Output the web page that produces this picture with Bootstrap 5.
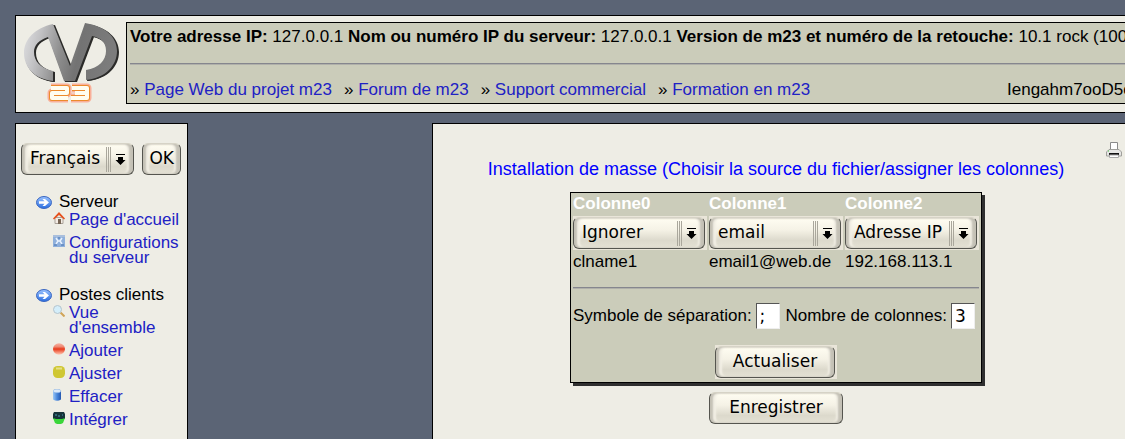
<!DOCTYPE html>
<html lang="fr">
<head>
<meta charset="utf-8">
<meta name="viewport" content="width=device-width, initial-scale=1">
<title>m23 - Installation de masse</title>
<link href="https://cdn.jsdelivr.net/npm/bootstrap@5.3.0/dist/css/bootstrap.min.css" rel="stylesheet">
<style>
  body { background: #5b6475; color: #000; font: 17px/20px "Liberation Sans", Arial, sans-serif; overflow-x: hidden; min-height: 100vh; }
  a { color: #2121c4; text-decoration: none; }
  hr { border-top: 1px solid #85868e; border-bottom: 1px solid #b0b0aa; opacity: 1; }
  .sheet { background: #eeede5; border: 1px solid #000; }
  .olive { background: #cbccba; border: 1px solid #000; }
  .open-right { border-right: 0; }
  .page { padding: 15px 0 0 15px; gap: 10px; min-height: 100vh; }
  .masthead { padding: 6px 0 8px 6px; gap: 2px; }
  .status { padding: 4px 0 3px 3px; min-width: 0; }
  .status hr { margin: 16px 0 15px; }
  .quick { gap: 12px; }
  .token { width: 118px; }
  .columns { gap: 244px; }
  .side { width: 173px; padding: 19px 6px 0 5px; }
  .work { padding: 18px 6px 0 0; min-width: 0; }
  .printer { margin: 0 -5px 0 auto; height: 16px; }
  .printer svg { display: block; }
  .skin {
    font: 17px/22px "DejaVu Sans", sans-serif; color: #000;
    height: 32px; border: 1px solid #55554f; border-top-color: #d6d3c6; border-radius: 6px;
    background-color: #e9e6da; background-image: linear-gradient(#fffdf2, #f5f2e6 40%, #dcd9cc 75%, #e4e1d4);
    box-shadow: inset 3px 0 2px #c4c1b6, inset -4px 0 2px #c4c1b6, inset 6px 0 2px #f3f0e6, inset -6px 0 2px #f3f0e6;
    padding: 2px 8px 4px;
  }
  .ok { padding: 2px 6px 4px; }
  .drop { position: relative; display: block; }
  .drop select { appearance: none; width: 100%; display: block; }
  .drop svg { position: absolute; right: 7px; top: 3px; pointer-events: none; }
  .halo { background: #e9e5d9; padding: 1px 2px 1px 0; }
  .mass td .halo { margin-right: 2px; }
  .mass td .halo svg { right: 9px; top: 4px; }
  .lang { margin-bottom: 18px; }
  .menu { padding-left: 15px; }
  .menu h2 { font-size: 17px; line-height: 18px; font-weight: 400; margin: 0 0 1px; gap: 7px; }
  .menu ul { padding-left: 17px; line-height: 15px; margin-bottom: 21px; }
  .menu li { gap: 4px; margin-bottom: 8px; }
  .menu li svg { flex: none; }
  .page-title { font-size: 18px; line-height: 22px; font-weight: 400; color: #00f; margin: 0; }
  .mass { box-shadow: 3px 3px 0 #2f2f2f; width: 412px; padding: 1px 2px 3px 2px; }
  .mass table { width: 408px; table-layout: fixed; }
  .mass th { color: #fff; padding: 0 0 2px; font-weight: 700; }
  .mass td { padding: 0; }
  .mass .values td { padding-top: 2px; }
  .mass hr { margin: 15px 0 14px; }
  .mini { width: 24px; height: 26px; border: 1px solid #eee; border-top-color: #555; border-left-color: #555; background: #fff; font: 17px/22px "DejaVu Sans", sans-serif; padding: 0 3px; color: #000; }
  .wide { width: 120px; }
  .wider { width: 134px; margin-top: 9px; }
</style>
</head>
<body>
<svg class="position-absolute" width="0" height="0" aria-hidden="true">
  <defs>
    <linearGradient id="blue" x2="0" y2="1"><stop stop-color="#9cc4ff"/><stop offset="1" stop-color="#2b6ee0"/></linearGradient>
    <linearGradient id="red" x2="0" y2="1"><stop stop-color="#f5b3a4"/><stop offset=".3" stop-color="#ee8a74"/><stop offset=".5" stop-color="#e8391a"/><stop offset="1" stop-color="#ffcdb8"/></linearGradient>
    <linearGradient id="can"><stop stop-color="#9cc8f6"/><stop offset=".5" stop-color="#4a88dc"/><stop offset="1" stop-color="#2457b0"/></linearGradient>
  </defs>
  <symbol id="arrow" viewBox="0 0 16 13"><ellipse cx="8" cy="6.500" rx="7.500" ry="6" fill="url(#blue)" stroke="#3a66c0"/><path d="M3 5.300h5.500L6.500 3H9l4 3.500L9 10H6.500l2-2.300H3z" fill="#fff"/></symbol>
  <symbol id="caret" viewBox="0 0 22 27"><path d="M1.500 1v25M3.500 1v25M5.500 1v25" stroke="#aaa79c"/><path d="M11 8h9v1h-9zM13 11h5v3h2.500L15.500 19 10.500 14H13z"/></symbol>
</svg>

<div class="page d-flex flex-column">
  <header class="masthead sheet open-right d-flex">
    <svg width="102" height="82" viewBox="0 0 102 82" class="flex-shrink-0" role="img" aria-label="m23">
      <defs>
        <linearGradient id="metal" x2="1" y2=".15"><stop stop-color="#e2e2e4"/><stop offset=".2" stop-color="#c2c2c4"/><stop offset=".45" stop-color="#8e8e8e"/><stop offset=".65" stop-color="#737373"/><stop offset="1" stop-color="#7c7c7c"/></linearGradient>
        <path id="emblem" d="M31 2 48 44 63 1C83 4 95 15 95 29S84 56 64 58V48C77 46 84 38 84 29S79 16 70 14L53 59H42L26 15C17 18 12 23 12 30 12 39 18 46 31 49V59C12 57 2 45 2 31S13 6 31 2Z"/>
      </defs>
      <use href="#emblem" transform="translate(2 1)" fill="#2c2c2a"/>
      <use href="#emblem" transform="translate(1 1)" fill="#2c2c2a"/>
      <use href="#emblem" fill="url(#metal)"/>
      <g fill="none" stroke-linejoin="round">
        <path d="M29 66H45V71H30V76H46M50 66H65V76H49M53 71H65" stroke="#f9b09a" stroke-width="9"/>
        <path d="M29 66H45V71H30V76H46M50 66H65V76H49M53 71H65" stroke="#ec8a2c" stroke-width="6"/>
        <path d="M29 66H45V71H30V76H46M50 66H65V76H49M53 71H65" stroke="#fffdf0" stroke-width="4"/>
      </g>
    </svg>
    <div class="status olive open-right flex-grow-1 overflow-hidden">
      <div class="text-nowrap"><b>Votre adresse IP:</b> 127.0.0.1 <b>Nom ou numéro IP du serveur:</b> 127.0.0.1 <b>Version de m23 et numéro de la retouche:</b> 10.1 rock (1003</div>
      <hr>
      <div class="d-flex text-nowrap">
        <nav class="quick d-flex" aria-label="Liens m23">
          <span>» <a href="#">Page Web du projet m23</a></span>
          <span>» <a href="#">Forum de m23</a></span>
          <span>» <a href="#">Support commercial</a></span>
          <span>» <a href="#">Formation en m23</a></span>
        </nav>
        <span class="token ms-auto">Iengahm7ooD5o</span>
      </div>
    </div>
  </header>

  <div class="columns d-flex flex-grow-1">
    <aside class="side sheet border-bottom-0 flex-shrink-0">
      <form class="lang d-flex gap-2">
        <label class="drop flex-grow-1"><select class="skin" aria-label="Langue"><option>Français</option></select><svg width="22" height="27"><use href="#caret"/></svg></label>
        <button type="button" class="skin ok">OK</button>
      </form>
      <nav class="menu" aria-label="Menu">
        <h2 class="d-flex align-items-center"><svg width="16" height="13"><use href="#arrow"/></svg>Serveur</h2>
        <ul class="list-unstyled">
          <li class="d-flex"><svg width="12" height="12" viewBox="0 0 12 12"><path d="M2 5.500h8V11.500H2z" fill="#f4ece4" stroke="#a9a29a"/><path d="M5 7h3v5H5z" fill="#765"/><path d="M0 6.500 6 0l6 6.500-1 1-5-4.500-5 4.500z" fill="#e8501c"/></svg><a href="#">Page d'accueil</a></li>
          <li class="d-flex"><svg width="12" height="12" viewBox="0 0 12 12"><path d="M0 0h12v12H0z" fill="#8fb0dc"/><path d="M0 0h12v2H0z" fill="#a9bfdc"/><path d="m3 9 2-3-2-3M9 9 7 6l2-3M5 6h2" stroke="#e8f2ff" stroke-width="1.500" fill="none"/><path d="M1 10h3M8 10h3M5 3h2" stroke="#4672b0"/></svg><a href="#">Configurations du serveur</a></li>
        </ul>
        <h2 class="d-flex align-items-center"><svg width="16" height="13"><use href="#arrow"/></svg>Postes clients</h2>
        <ul class="list-unstyled">
          <li class="d-flex"><svg width="12" height="12" viewBox="0 0 12 12"><path d="m7.500 7.500 4 4" stroke="#d0a458" stroke-width="2"/><circle cx="4.500" cy="4.500" r="4" fill="#d4eefa" stroke="#b4c4cc"/></svg><a href="#">Vue d'ensemble</a></li>
          <li class="d-flex"><svg width="12" height="12" viewBox="0 0 12 12"><ellipse cx="6" cy="6" rx="6" ry="5.800" fill="url(#red)"/></svg><a href="#">Ajouter</a></li>
          <li class="d-flex"><svg width="12" height="12" viewBox="0 0 12 12"><rect width="12" height="12" rx="4.500" fill="#cfc733"/><path d="M3 2.500h6" stroke="#e6e088" stroke-width="2"/></svg><a href="#">Ajuster</a></li>
          <li class="d-flex"><svg width="12" height="12" viewBox="0 0 12 12"><path d="M0 2v8.500q4 2.500 8 0V2z" fill="url(#can)"/><ellipse cx="4" cy="2" rx="4" ry="1.800" fill="#dceafa" stroke="#7aa8e0" stroke-width=".5"/></svg><a href="#">Effacer</a></li>
          <li class="d-flex"><svg width="12" height="12" viewBox="0 0 12 12"><path d="M1 0h10l1 2v5H0V2z" fill="#16333a"/><path d="M2 3h2M5 4h2M9 3h1" stroke="#4b9bb0"/><path d="M0 6l3 1h6l3-1-2 5-2 1H4l-2-1z" fill="#3ad63a"/></svg><a href="#">Intégrer</a></li>
        </ul>
      </nav>
    </aside>

    <main class="work sheet open-right border-bottom-0 flex-grow-1">
      <button class="printer border-0 bg-transparent p-0 d-block" type="button" aria-label="Imprimer"><svg width="18" height="16" viewBox="0 0 18 16"><path d="M4.500.500h7v7h-7z" fill="#fff" stroke="#8a8a8a"/><path d="M3 7.500h10l2.500 2.500v4H.500v-4z" fill="#e6e6e4" stroke="#a0a09c"/><path d="M3 12h10" stroke="#111" stroke-width="2"/><path d="M3.500 13h9v2.500h-9z" fill="#fff" stroke="#aaa"/><path d="M2 9h1" stroke="#4c4"/></svg></button>
      <h1 class="page-title text-center">Installation de masse (Choisir la source du fichier/assigner les colonnes)</h1>
      <form class="d-flex flex-column align-items-center pt-1 mt-2">
        <div class="mass olive">
          <table>
            <thead><tr><th>Colonne0</th><th>Colonne1</th><th>Colonne2</th></tr></thead>
            <tbody>
              <tr>
                <td><label class="drop halo"><select class="skin" aria-label="Colonne0"><option>Ignorer</option></select><svg width="22" height="27"><use href="#caret"/></svg></label></td>
                <td><label class="drop halo"><select class="skin" aria-label="Colonne1"><option>email</option></select><svg width="22" height="27"><use href="#caret"/></svg></label></td>
                <td><label class="drop halo"><select class="skin" aria-label="Colonne2"><option>Adresse IP</option></select><svg width="22" height="27"><use href="#caret"/></svg></label></td>
              </tr>
              <tr class="values"><td>clname1</td><td>email1@web.de</td><td>192.168.113.1</td></tr>
            </tbody>
          </table>
          <hr>
          <div class="d-flex align-items-center justify-content-between pe-1">
            <span class="d-flex align-items-center gap-1"><label for="sep">Symbole de séparation:</label><input id="sep" class="mini" value=";"></span>
            <span class="d-flex align-items-center gap-1"><label for="num">Nombre de colonnes:</label><input id="num" class="mini" value="3"></span>
          </div>
          <div class="text-center mt-3"><span class="halo d-inline-block"><button type="button" class="skin wide">Actualiser</button></span></div>
        </div>
        <button type="button" class="skin wider">Enregistrer</button>
      </form>
    </main>
  </div>
</div>
<script src="https://cdn.jsdelivr.net/npm/bootstrap@5.3.0/dist/js/bootstrap.bundle.min.js"></script>
</body>
</html>
